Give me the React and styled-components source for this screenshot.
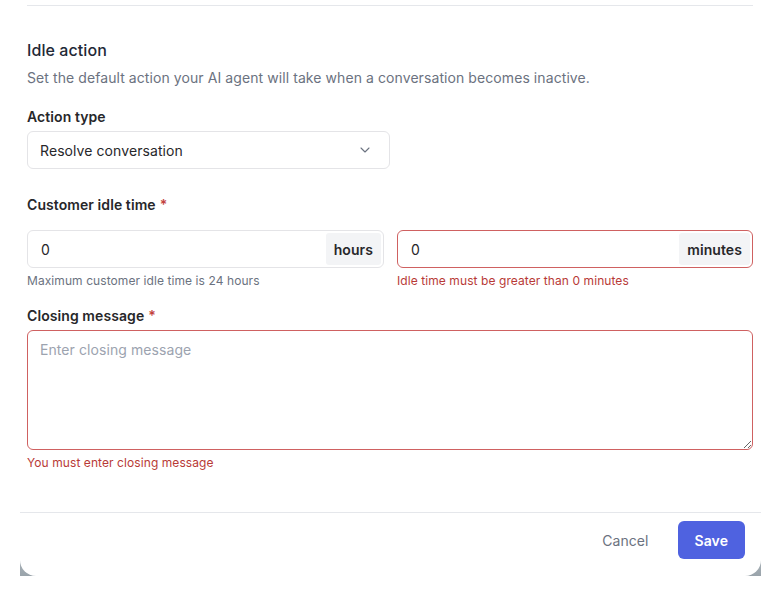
import React from "react";
import styled, { createGlobalStyle } from "styled-components";

const Global = createGlobalStyle`
  html, body { margin: 0; padding: 0; background: #ffffff; }
  body { font-family: Inter, "Noto Sans", sans-serif; letter-spacing: 0.08px; -webkit-font-smoothing: antialiased; }
  * { box-sizing: border-box; }
`;

const Frame = styled.div`
  width: 741px;
  height: 576px;
  margin-left: 20px;
  background: linear-gradient(to bottom, #ffffff 0, #ffffff 520px, #b9c1c7 540px, #9aa4ab 576px);
`;

const Panel = styled.div`
  height: 100%;
  background: #ffffff;
  border-radius: 0 0 16px 16px;
  display: flex;
  flex-direction: column;
`;

const Body = styled.div`
  flex: 1;
  padding: 5px 8px 0 7px;
`;

const TopRule = styled.div`
  height: 1px;
  background: #e5e7eb;
`;

const Heading = styled.h2`
  margin: 32px 0 0;
  font-size: 16px;
  line-height: 24px;
  font-weight: 500;
  color: #1f2937;
`;

const Description = styled.p`
  margin: 6px 0 0;
  font-size: 14px;
  line-height: 20px;
  color: #6b7280;
`;

const Label = styled.div`
  margin-top: ${(p) => p.$mt}px;
  margin-bottom: ${(p) => p.$mb}px;
  font-size: 14px;
  line-height: 20px;
  font-weight: 600;
  color: #27272a;
`;

const Star = styled.span`
  color: #c2413d;
  margin-left: 4px;
`;

const Select = styled.div`
  width: 363px;
  height: 38px;
  border: 1px solid #e4e4e7;
  border-radius: 6px;
  display: flex;
  align-items: center;
  justify-content: space-between;
  padding: 0 16px 0 12px;
  font-size: 14px;
  color: #27272a;
`;

const Row = styled.div`
  display: grid;
  grid-template-columns: 357px 356px;
  column-gap: 13px;
`;

const Field = styled.div`
  display: flex;
  flex-direction: column;
`;

const InputBox = styled.div`
  height: 38px;
  border: 1px solid ${(p) => (p.$error ? "#cf6161" : "#e4e4e7")};
  border-radius: 6px;
  display: flex;
  align-items: stretch;
  padding: 2px;
`;

const Value = styled.div`
  flex: 1;
  display: flex;
  align-items: center;
  padding-left: 11px;
  font-size: 14px;
  color: #27272a;
`;

const Addon = styled.div`
  display: flex;
  align-items: center;
  padding: 0 8px;
  background: #f3f4f6;
  border-radius: 3px;
  font-size: 14px;
  font-weight: 600;
  color: #27272a;
`;

const Hint = styled.div`
  margin-top: 5px;
  font-size: 12px;
  line-height: 16px;
  color: ${(p) => (p.$error ? "#b83a37" : "#6b7280")};
`;

const TextArea = styled.textarea`
  display: block;
  width: 726px;
  height: 120px;
  border: 1px solid #cf6161;
  border-radius: 6px;
  padding: 9px 12px;
  font-family: Inter, "Noto Sans", sans-serif;
  font-size: 14px;
  line-height: 20px;
  letter-spacing: 0.08px;
  color: #27272a;
  outline: none;
  resize: vertical;
  &::placeholder { color: #9ca3af; }
`;

const Footer = styled.div`
  border-top: 1px solid #e5e7eb;
  padding: 8px 16px 17px;
  display: flex;
  justify-content: flex-end;
  align-items: center;
  gap: 13px;
`;

const Button = styled.button`
  height: 38px;
  padding: 0 ${(p) => (p.$primary ? 17 : 16)}px;
  border: none;
  border-radius: 6px;
  background: ${(p) => (p.$primary ? "#4f62e0" : "transparent")};
  color: ${(p) => (p.$primary ? "#ffffff" : "#6b7280")};
  font-family: Inter, "Noto Sans", sans-serif;
  font-size: 14px;
  letter-spacing: 0.08px;
  font-weight: ${(p) => (p.$primary ? 600 : 400)};
  cursor: pointer;
`;

const Chevron = () => (
  <svg width="16" height="16" viewBox="0 0 24 24" fill="none" stroke="#6b7280" strokeWidth="1.6" strokeLinecap="round" strokeLinejoin="round">
    <path d="m6 9 6 6 6-6" />
  </svg>
);

export default function App() {
  return (
    <>
      <Global />
      <Frame>
        <Panel>
          <Body>
            <TopRule />
            <Heading>Idle action</Heading>
            <Description>
              Set the default action your AI agent will take when a conversation becomes inactive.
            </Description>
            <Label $mt={19} $mb={4}>Action type</Label>
            <Select>
              <span>Resolve conversation</span>
              <Chevron />
            </Select>
            <Label $mt={26} $mb={15}>
              Customer idle time<Star>*</Star>
            </Label>
            <Row>
              <Field>
                <InputBox>
                  <Value>0</Value>
                  <Addon>hours</Addon>
                </InputBox>
                <Hint>Maximum customer idle time is 24 hours</Hint>
              </Field>
              <Field>
                <InputBox $error>
                  <Value>0</Value>
                  <Addon>minutes</Addon>
                </InputBox>
                <Hint $error>Idle time must be greater than 0 minutes</Hint>
              </Field>
            </Row>
            <Label $mt={17} $mb={4}>
              Closing message<Star>*</Star>
            </Label>
            <TextArea placeholder="Enter closing message" />
            <Hint $error>You must enter closing message</Hint>
          </Body>
          <Footer>
            <Button>Cancel</Button>
            <Button $primary>Save</Button>
          </Footer>
        </Panel>
      </Frame>
    </>
  );
}
